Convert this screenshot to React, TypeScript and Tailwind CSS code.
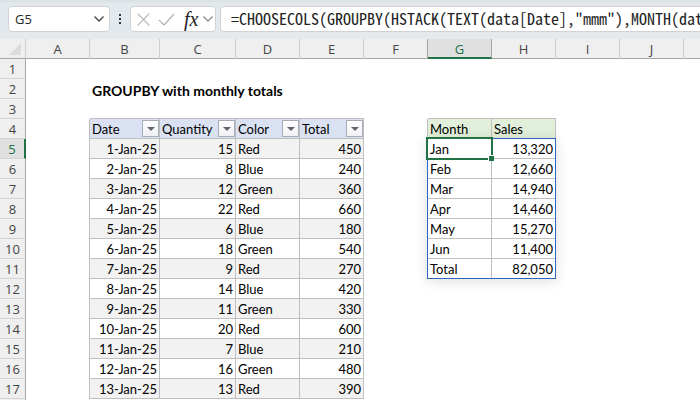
import React from "react";
import { clsx } from "clsx";

type Sale = { date: string; quantity: number; color: string; total: number };

const sales: Sale[] = [
  { date: "1-Jan-25", quantity: 15, color: "Red", total: 450 },
  { date: "2-Jan-25", quantity: 8, color: "Blue", total: 240 },
  { date: "3-Jan-25", quantity: 12, color: "Green", total: 360 },
  { date: "4-Jan-25", quantity: 22, color: "Red", total: 660 },
  { date: "5-Jan-25", quantity: 6, color: "Blue", total: 180 },
  { date: "6-Jan-25", quantity: 18, color: "Green", total: 540 },
  { date: "7-Jan-25", quantity: 9, color: "Red", total: 270 },
  { date: "8-Jan-25", quantity: 14, color: "Blue", total: 420 },
  { date: "9-Jan-25", quantity: 11, color: "Green", total: 330 },
  { date: "10-Jan-25", quantity: 20, color: "Red", total: 600 },
  { date: "11-Jan-25", quantity: 7, color: "Blue", total: 210 },
  { date: "12-Jan-25", quantity: 16, color: "Green", total: 480 },
  { date: "13-Jan-25", quantity: 13, color: "Red", total: 390 },
];

const months = [
  ["Jan", "13,320"],
  ["Feb", "12,660"],
  ["Mar", "14,940"],
  ["Apr", "14,460"],
  ["May", "15,270"],
  ["Jun", "11,400"],
  ["Total", "82,050"],
];

const letters = ["A", "B", "C", "D", "E", "F", "G", "H", "I", "J"];
const lined = "border-r border-b border-[#bfbfbf]";
const textPad = "px-0.5 pt-0.5 pb-0";

function Chevron({ className }: { className: string }) {
  return (
    <svg viewBox="0 0 12 8" className={className} fill="none" stroke="currentColor" strokeWidth="1.3" aria-hidden="true">
      <path d="M1.500 1.500 6 6l4.500-4.500" />
    </svg>
  );
}

function FormulaBar() {
  return (
    <header className="flex h-[39px] items-start gap-1 bg-[#e3e9ec] bg-linear-to-b from-[#d9e1e4] to-[#e3e9ec] to-10% pt-1.5 pl-2">
      <div className="flex h-[26px] w-[102px] shrink-0 items-center rounded-sm border border-[#d0d2d3] bg-white pr-1 pl-1.5">
        <input
          aria-label="Name box"
          defaultValue="G5"
          className="w-0 grow bg-transparent font-['Open_Sans',sans-serif] text-[13px] leading-5 text-[#262626] outline-none"
        />
        <button type="button" aria-label="Show names" className="text-[#444]">
          <Chevron className="h-2 w-3" />
        </button>
      </div>
      <div className="flex h-[26px] w-3 shrink-0 flex-col items-center justify-center gap-0.5" aria-hidden="true">
        <i className="size-0.5 bg-[#333]" />
        <i className="size-0.5 bg-[#333]" />
        <i className="size-0.5 bg-[#333]" />
      </div>
      <div className="flex h-[26px] w-[86px] shrink-0 items-center justify-between rounded-sm border border-[#d0d2d3] bg-white pr-px pl-1.5">
        <button type="button" aria-label="Cancel" className="text-[#b5b5b5]">
          <svg viewBox="0 0 13 13" className="size-[13px]" stroke="currentColor" strokeWidth="1.2" fill="none">
            <path d="M.7.7l11.600 11.600M12.300.7.7 12.300" />
          </svg>
        </button>
        <button type="button" aria-label="Enter" className="pl-1 text-[#b5b5b5]">
          <svg viewBox="0 0 17 13" className="h-[13px] w-[17px]" stroke="currentColor" strokeWidth="1.3" fill="none">
            <path d="M1 7l5 5L16 1" />
          </svg>
        </button>
        <button
          type="button"
          aria-label="Insert function"
          className="pl-1.5 font-['Liberation_Serif',serif] text-[20px] leading-5 text-[#222] italic"
        >
          fx
        </button>
        <button type="button" aria-label="Function list" className="text-[#8a8a8a]">
          <Chevron className="h-2 w-3" />
        </button>
      </div>
      <div className="h-[26px] min-w-0 grow rounded-l-sm border border-r-0 border-[#d0d2d3] bg-white pl-2.5">
        <input
          aria-label="Formula"
          defaultValue={'=CHOOSECOLS(GROUPBY(HSTACK(TEXT(data[Date],"mmm"),MONTH(dat'}
          className="block h-[22px] w-full bg-transparent font-['Noto_Sans_Mono_CJK_SC','DejaVu_Sans_Mono',monospace] text-[16px] leading-[22px] text-[#222] outline-none"
        />
      </div>
    </header>
  );
}

function FilterHeader({ label }: { label: string }) {
  return (
    <td className={clsx(lined, "bg-[#d9e1f2] p-0")}>
      <div className="flex h-[19px] items-center justify-between pl-0.5">
        <span className="pt-0.5">{label}</span>
        <button
          type="button"
          aria-label={`Filter ${label}`}
          className="flex size-[17px] shrink-0 items-center justify-center border border-[#a6adb8] bg-linear-to-b from-white to-[#eef0f4]"
        >
          <svg viewBox="0 0 8 4" className="h-1 w-2" aria-hidden="true">
            <path d="M0 0h8L4 4z" fill="#666" />
          </svg>
        </button>
      </div>
    </td>
  );
}

function leftCells(row: number) {
  if (row === 2) {
    return (
      <td colSpan={4} className={clsx(textPad, "text-[14px] leading-[17px] font-bold whitespace-nowrap")}>
        GROUPBY with monthly totals
      </td>
    );
  }
  if (row === 3) {
    return <td colSpan={4} className="border-b border-[#bfbfbf] p-0" />;
  }
  if (row === 4) {
    return ["Date", "Quantity", "Color", "Total"].map((label) => <FilterHeader key={label} label={label} />);
  }
  const sale = sales[row - 5];
  if (!sale) return <td colSpan={4} className="p-0" />;
  const cell = clsx(lined, textPad, row % 2 === 1 && "bg-[#f2f2f2]");
  return (
    <>
      <td className={clsx(cell, "text-right")}>{sale.date}</td>
      <td className={clsx(cell, "text-right")}>{sale.quantity}</td>
      <td className={cell}>{sale.color}</td>
      <td className={clsx(cell, "text-right")}>{sale.total}</td>
    </>
  );
}

function rightCells(row: number) {
  if (row === 3) return <td colSpan={2} className="border-b border-[#bfbfbf] p-0" />;
  if (row === 4) {
    return ["Month", "Sales"].map((label) => (
      <td key={label} className={clsx(lined, textPad, "bg-[#e2efda]")}>
        {label}
      </td>
    ));
  }
  const month = months[row - 5];
  if (!month) return <td colSpan={2} className="p-0" />;
  return (
    <>
      <td className={clsx(lined, textPad, row === 5 && "relative")}>
        {month[0]}
        {row === 5 && (
          <>
            <div className="pointer-events-none absolute -top-px -left-px h-[141px] w-[129px] border border-[#2f67c0] shadow-[0_2px_12px_rgba(0,0,0,0.14)]" />
            <div className="pointer-events-none absolute -inset-0.5 border-2 border-[#217346]" />
            <div className="pointer-events-none absolute -right-[3px] -bottom-[3px] size-1.5 border-t border-l border-white bg-[#217346]" />
          </>
        )}
      </td>
      <td className={clsx(lined, textPad, "text-right")}>{month[1]}</td>
    </>
  );
}

function Sheet() {
  return (
    <table className="w-full table-fixed border-separate border-spacing-0 font-['Lato',sans-serif] text-[13px] leading-[17px] text-black">
      <colgroup>
        <col className="w-[26px]" />
        <col className="w-16" />
        <col className="w-[70px]" />
        <col className="w-[76px]" />
        <col className="w-16" />
        <col className="w-16" />
        <col className="w-16" />
        <col className="w-16" />
        <col className="w-16" />
        <col className="w-16" />
        <col className="w-16" />
        <col />
      </colgroup>
      <thead>
        <tr className="h-5 bg-[#efefef] font-['Open_Sans',sans-serif]">
          <th className="border-r border-b border-r-[#d0d0d0] border-b-[#a6a6a6] p-0">
            <button type="button" aria-label="Select all" className="flex h-[19px] w-full items-center justify-end pr-1">
              <svg viewBox="0 0 12 12" className="size-3" aria-hidden="true">
                <path d="M12 0v12H0z" fill="#dcdcdc" />
              </svg>
            </button>
          </th>
          {letters.map((letter) => (
            <th
              key={letter}
              scope="col"
              className={clsx(
                "border-r p-0 pt-0.5 font-normal",
                letter === "G"
                  ? "border-b-2 border-r-[#a6a6a6] border-b-[#217346] bg-[#e0e0e0] leading-4 text-[#217346]"
                  : "border-b border-b-[#a6a6a6] text-[#444]",
                letter === "F" ? "border-r-[#a6a6a6]" : letter !== "G" && "border-r-[#cfcfcf]",
              )}
            >
              {letter}
            </th>
          ))}
          <th className="border-b border-[#a6a6a6] p-0" />
        </tr>
      </thead>
      <tbody>
        {Array.from({ length: 18 }, (_, i) => i + 1).map((row) => (
          <tr key={row} className="h-5">
            <th
              scope="row"
              className={clsx(
                "border-b border-b-[#d4d4d4] p-0 pt-0.5 font-['Open_Sans',sans-serif] font-normal",
                row === 5
                  ? "border-r-2 border-r-[#217346] bg-[#e0e0e0] text-[#217346]"
                  : "border-r border-r-[#a6a6a6] bg-[#efefef] text-[#444]",
              )}
            >
              {row < 18 && row}
            </th>
            <td className={clsx("p-0", row > 3 && row < 18 && "border-r border-[#bfbfbf]")} />
            {leftCells(row)}
            <td className={clsx("p-0", row > 3 && row < 12 && "border-r border-[#bfbfbf]")} />
            {rightCells(row)}
            <td colSpan={3} className="p-0" />
          </tr>
        ))}
      </tbody>
    </table>
  );
}

export default function App() {
  return (
    <main className="h-screen overflow-hidden bg-white">
      <FormulaBar />
      <Sheet />
    </main>
  );
}
